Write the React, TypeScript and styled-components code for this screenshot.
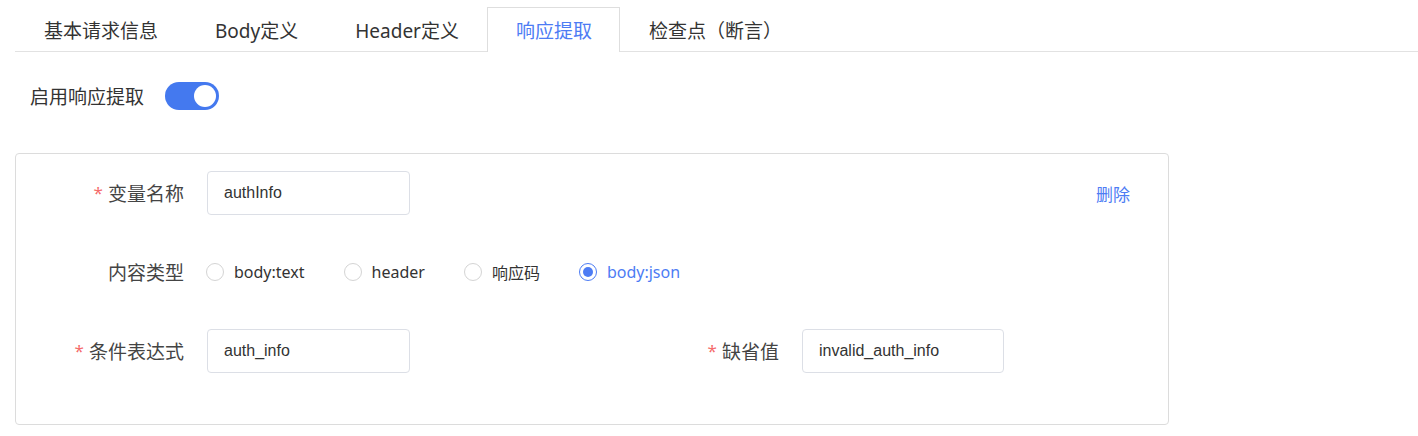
import React, { useState } from 'react'
import styled, { createGlobalStyle } from 'styled-components'

const GlobalStyle = createGlobalStyle`
    body{
        margin: 0;
        background: #fff;
        font-family: "Noto Sans", "Noto Sans CJK SC", sans-serif;
        color: #333;
    }
`

const tabs = ["基本请求信息", "Body定义", "Header定义", "响应提取", "检查点（断言）"]
const types = ["body:text", "header", "响应码", "body:json"]

const App = () => {
    const [active, setActive] = useState(3);
    const [enabled, setEnabled] = useState(true);
    const [kind, setKind] = useState("body:json");
    const [name, setName] = useState("authInfo");
    const [expr, setExpr] = useState("auth_info");
    const [fallback, setFallback] = useState("invalid_auth_info");

  return (
    <Page>
        <GlobalStyle />
        <TabBar>
            {tabs.map((t, i) => (
                <Tab key={t} $active={i === active} onClick={() => setActive(i)}>{t}</Tab>
            ))}
        </TabBar>

        <SwitchRow>
            <span>启用响应提取</span>
            <Switch $on={enabled} onClick={() => setEnabled(!enabled)} />
        </SwitchRow>

        <Card>
            <Row>
                <FormItem $width={595}>
                    <Label $required>变量名称</Label>
                    <Input value={name} onChange={(e) => setName(e.target.value)} />
                </FormItem>
                <DeleteLink>删除</DeleteLink>
            </Row>

            <Row>
                <FormItem>
                    <Label>内容类型</Label>
                    <RadioGroup>
                        {types.map((t) => (
                            <RadioItem key={t} $checked={kind === t} onClick={() => setKind(t)}>
                                <RadioDot $checked={kind === t} />
                                <span>{t}</span>
                            </RadioItem>
                        ))}
                    </RadioGroup>
                </FormItem>
            </Row>

            <Row>
                <FormItem $width={595}>
                    <Label $required>条件表达式</Label>
                    <Input value={expr} onChange={(e) => setExpr(e.target.value)} />
                </FormItem>
                <FormItem>
                    <Label $required>缺省值</Label>
                    <Input $w={202} value={fallback} onChange={(e) => setFallback(e.target.value)} />
                </FormItem>
            </Row>
        </Card>
    </Page>
  )
}

const Page = styled.div`
    padding-top: 7px;
    width: 1418px;
`

const TabBar = styled.div`
    display: flex;
    margin-left: 15px;
    border-bottom: 1px solid #e2e2e2;
    height: 44px;
`

const Tab = styled.div<{ $active?: boolean }>`
    box-sizing: border-box;
    padding: 0 27px 0 28px;
    display: flex;
    align-items: center;
    font-size: 19px;
    cursor: pointer;
    color: ${(p) => p.$active ? "#4d7cf4" : "#333"};
    border: 1px solid ${(p) => p.$active ? "#dedede" : "transparent"};
    border-bottom: none;
    background: #fff;
    margin-bottom: ${(p) => p.$active ? "-1px" : "0"};
    height: ${(p) => p.$active ? "45px" : "44px"};
`

const SwitchRow = styled.div`
    display: flex;
    align-items: center;
    gap: 21px;
    padding-left: 30px;
    margin-top: 30px;
    font-size: 19px;
    height: 28px;
`

const Switch = styled.div<{ $on: boolean }>`
    position: relative;
    width: 54px;
    height: 28px;
    border-radius: 14px;
    background: ${(p) => p.$on ? "#4479ef" : "#dcdfe6"};
    cursor: pointer;
    &::after{
        content: "";
        position: absolute;
        top: 3px;
        left: ${(p) => p.$on ? "29px" : "3px"};
        width: 22px;
        height: 22px;
        border-radius: 50%;
        background: #fff;
    }
`

const Card = styled.div`
    margin: 43px 0 0 15px;
    width: 1154px;
    box-sizing: border-box;
    border: 1px solid #dcdcdc;
    border-radius: 4px;
    padding: 17px 38px 51px 0;
    display: flex;
    flex-direction: column;
    gap: 35px;
`

const Row = styled.div`
    display: flex;
    align-items: center;
    height: 44px;
`

const FormItem = styled.div<{ $width?: number }>`
    display: flex;
    align-items: center;
    gap: 23px;
    width: ${(p) => p.$width ? `${p.$width}px` : "auto"};
    flex-shrink: 0;
`

const Label = styled.label<{ $required?: boolean }>`
    width: 168px;
    text-align: right;
    font-size: 19px;
    color: #444;
    &::before{
        content: ${(p) => p.$required ? '"*"' : "none"};
        color: #f56c6c;
        font-size: 17px;
        margin-right: 5px;
        position: relative;
        top: -2px;
    }
`

const Input = styled.input<{ $w?: number }>`
    width: ${(p) => p.$w || 203}px;
    height: 44px;
    box-sizing: border-box;
    border: 1px solid #dcdfe6;
    border-radius: 4px;
    padding: 0 16px;
    font-family: "Liberation Sans", Arial, sans-serif;
    font-size: 16px;
    color: #333;
    outline: none;
`

const DeleteLink = styled.span`
    margin-left: auto;
    font-size: 17px;
    color: #4d7cf4;
    cursor: pointer;
`

const RadioGroup = styled.div`
    display: flex;
    align-items: center;
    gap: 39px;
    margin-left: -1px;
`

const RadioItem = styled.label<{ $checked: boolean }>`
    display: flex;
    align-items: center;
    gap: 10px;
    font-size: 16px;
    cursor: pointer;
    color: ${(p) => p.$checked ? "#4d7cf4" : "#333"};
`

const RadioDot = styled.span<{ $checked: boolean }>`
    width: 18px;
    height: 18px;
    box-sizing: border-box;
    border-radius: 50%;
    border: 1px solid ${(p) => p.$checked ? "#4d7cf4" : "#d4d4d4"};
    display: flex;
    align-items: center;
    justify-content: center;
    &::after{
        content: "";
        width: 10px;
        height: 10px;
        border-radius: 50%;
        background: ${(p) => p.$checked ? "#4d7cf4" : "transparent"};
    }
`

export default App
